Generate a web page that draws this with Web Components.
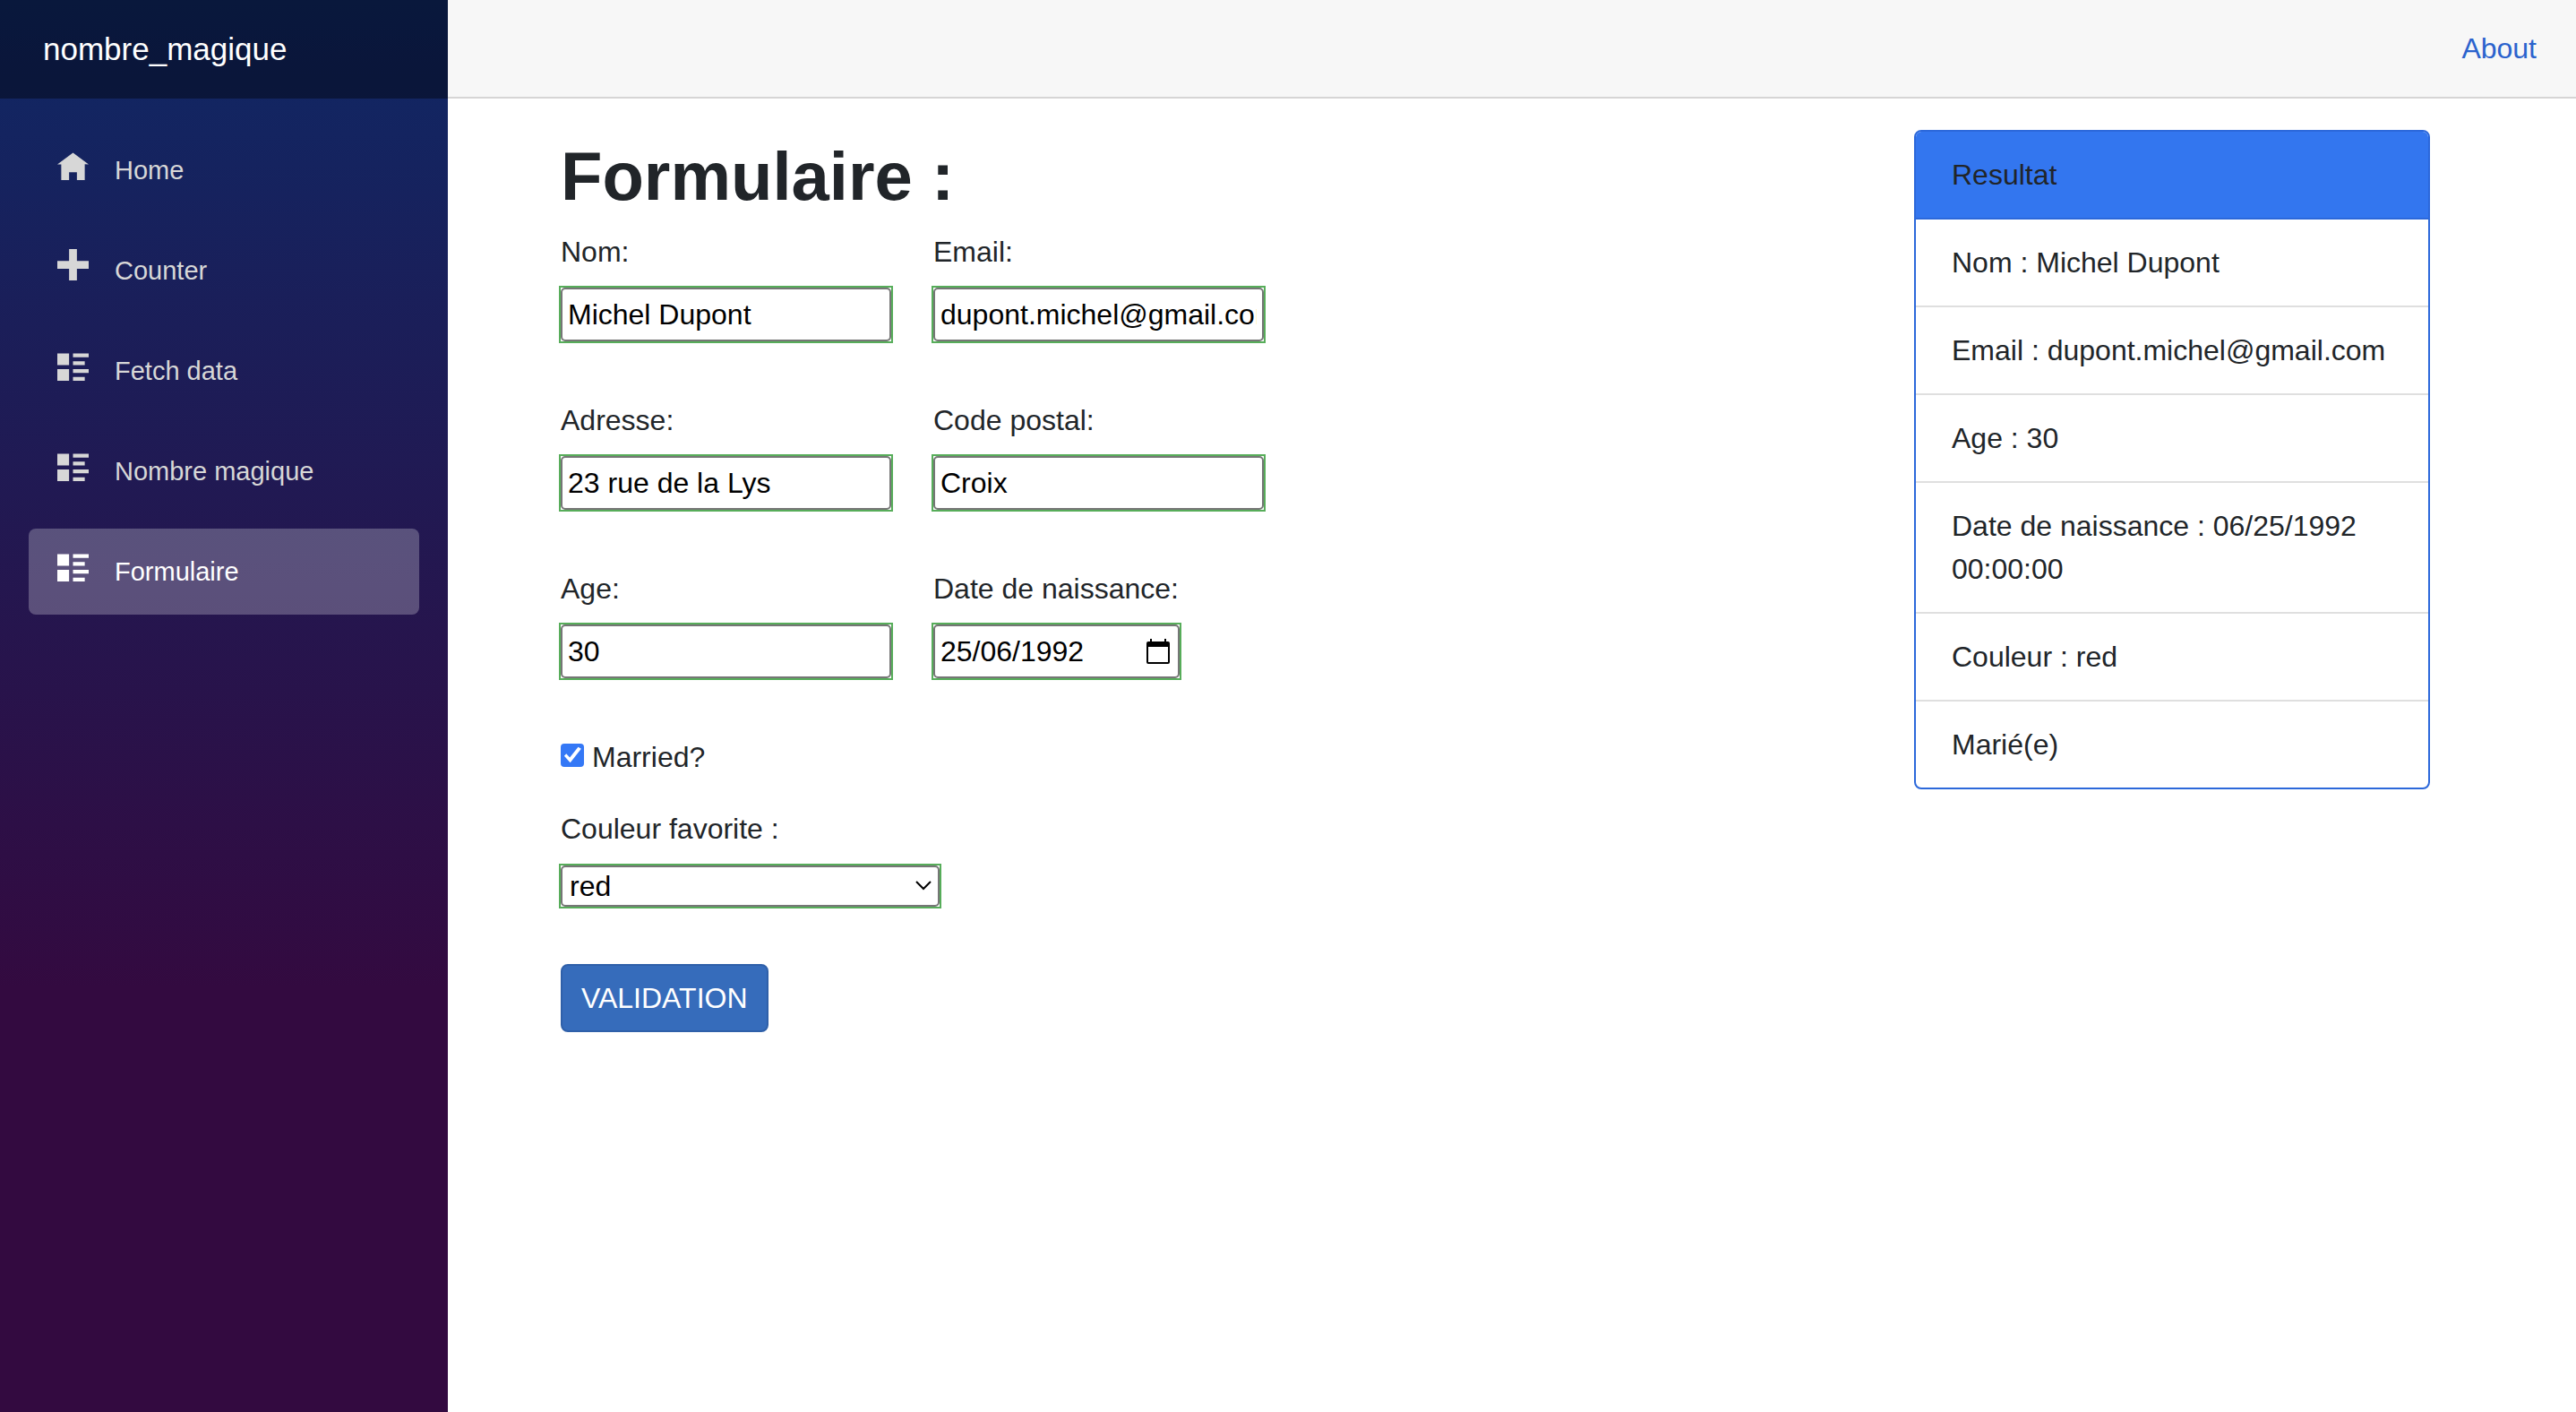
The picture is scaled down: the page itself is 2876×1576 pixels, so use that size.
<!DOCTYPE html>
<html lang="fr">
<head>
<meta charset="utf-8">
<title>nombre_magique</title>
<style>
  body { margin: 0; font-family: "Liberation Sans", Arial, sans-serif; font-size: 32px; line-height: 48px; color: #212529; background: #fff; }
</style>
</head>
<body>
<app-shell>
  <app-sidebar slot="sidebar" brand="nombre_magique">
    <nav-item icon="home" href="#home">Home</nav-item>
    <nav-item icon="plus" href="#counter">Counter</nav-item>
    <nav-item icon="list" href="#fetchdata">Fetch data</nav-item>
    <nav-item icon="list" href="#nombre-magique">Nombre magique</nav-item>
    <nav-item icon="list" href="#formulaire" active>Formulaire</nav-item>
  </app-sidebar>
  <top-bar slot="top"></top-bar>
  <person-form></person-form>
  <result-card heading="Resultat">
    <result-row>Nom : Michel Dupont</result-row>
    <result-row>Email : dupont.michel@gmail.com</result-row>
    <result-row>Age : 30</result-row>
    <result-row>Date de naissance : 06/25/1992 00:00:00</result-row>
    <result-row>Couleur : red</result-row>
    <result-row>Marié(e)</result-row>
  </result-card>
</app-shell>

<script>
const define = (name, render) => customElements.define(name, class extends HTMLElement {
  constructor() { super(); this.attachShadow({ mode: "open" }); }
  connectedCallback() { this.shadowRoot.innerHTML = render(this); }
});

define("app-shell", () => `
  <style>
    :host { display: flex; min-height: 100vh; }
    .side { flex: 0 0 500px; background: linear-gradient(180deg, #0f2865 0%, #330a40 70%); }
    .page { flex: 1; min-width: 0; }
    main { display: flex; justify-content: space-between; align-items: flex-start; gap: 64px; padding: 35px 163px 64px 126px; }
  </style>
  <div class="side"><slot name="sidebar"></slot></div>
  <div class="page">
    <slot name="top"></slot>
    <main><slot></slot></main>
  </div>`);

define("app-sidebar", el => `
  <style>
    :host { display: block; }
    header { display: flex; align-items: center; box-sizing: border-box; height: 110px; padding: 0 48px; background: rgba(0, 0, 0, .4); }
    a { color: #fff; font-size: 35px; text-decoration: none; }
    nav { display: flex; flex-direction: column; gap: 16px; padding: 32px; }
  </style>
  <header><a href="#">${el.getAttribute("brand")}</a></header>
  <nav><slot></slot></nav>`);

const icons = {
  home: "M4 1l-4 3h1v4h2v-2h2v2h2v-4.03l1 .03-4-3z",
  plus: "M3 0v3h-3v2h3v3h2v-3h3v-2h-3v-3h-2z",
  list: "M0 1v3h3v-3h-3zm4 0v1h4v-1h-4zm0 2v1h3v-1h-3zm-4 2v3h3v-3h-3zm4 0v1h4v-1h-4zm0 2v1h3v-1h-3z"
};
define("nav-item", el => `
  <style>
    :host { display: block; }
    a { display: flex; align-items: flex-start; padding-left: 32px; border-radius: 8px; color: #d7d7d7; font-size: 29px; line-height: 96px; text-decoration: none; }
    :host([active]) a { color: #fff; background: rgba(255, 255, 255, .25); }
    svg { width: 35px; height: 35px; margin: 24px 29px 0 0; fill: currentColor; }
  </style>
  <a href="${el.getAttribute("href")}"><svg viewBox="0 0 8 8" aria-hidden="true"><path d="${icons[el.getAttribute("icon")]}"/></svg><slot></slot></a>`);

define("top-bar", () => `
  <style>
    :host { display: flex; align-items: center; justify-content: flex-end; box-sizing: border-box; height: 110px; padding: 0 44px; background: #f7f7f7; border-bottom: 2px solid #d6d5d5; }
    a { color: #2b63cd; text-decoration: none; }
  </style>
  <a href="#about">About</a>`);

define("form-field", el => {
  const date = el.getAttribute("type") === "date";
  return `
  <style>
    :host { display: flex; flex-direction: column; align-items: flex-start; gap: 16px; }
    .frame { display: flex; position: relative; outline: 2px solid #57ad5a; }
    input { box-sizing: border-box; width: ${date ? 275 : 369}px; height: 60px; margin: 0; padding: 2px 6px; border: 2px solid #767676; border-radius: 5px; background: #fff; color: #000; font: inherit; outline: none; }
    button { position: absolute; right: 10px; top: 16px; width: 28px; height: 28px; padding: 0; border: 0; background: none; }
    svg { display: block; }
  </style>
  <label for="control">${el.getAttribute("label")}</label>
  <div class="frame"><input id="control" type="text" value="${el.getAttribute("value")}">${date ? `
    <button type="button" aria-label="Calendrier"><svg width="28" height="28" viewBox="0 0 28 28"><path fill="#000" fill-rule="evenodd" d="M5 0h2v3h14V0h2v3h2q2 0 2 2v21q0 2-2 2H3q-2 0-2-2V5q0-2 2-2h2zM3 9v17h22V9z"/></svg></button>` : ""}</div>`;
});

define("person-form", () => `
  <style>
    :host { display: block; }
    h1 { margin: 0 0 12px; padding-top: 4px; font-size: 76px; line-height: 96px; font-weight: bold; }
    form { display: flex; flex-direction: column; align-items: flex-start; gap: 64px; }
    .grid { display: grid; grid-template-columns: auto auto; gap: 64px 47px; }
    .group { display: flex; flex-direction: column; align-items: flex-start; gap: 32px; }
    .check { display: flex; align-items: center; gap: 9px; }
    .check input { appearance: none; width: 26px; height: 26px; margin: 0 0 4px; border-radius: 4px; background: #3478f6; }
    .check input::before { content: ""; display: block; width: 26px; height: 26px; }
    .check input:checked::before { background: #fff; clip-path: polygon(15% 53%, 24% 43%, 39% 60%, 75% 14%, 88% 22%, 41% 82%); }
    .colour { display: flex; flex-direction: column; align-items: flex-start; gap: 17px; }
    .frame { display: flex; position: relative; outline: 2px solid #57ad5a; }
    select { appearance: none; box-sizing: border-box; width: 423px; height: 46px; margin: 0; padding: 0 40px 0 8px; border: 2px solid #767676; border-radius: 5px; background: #fff; color: #000; font: inherit; line-height: 40px; outline: none; }
    .frame svg { position: absolute; right: 8px; top: 15px; pointer-events: none; }
    .submit { box-sizing: border-box; height: 76px; margin: 0; padding: 0 21px; border: 2px solid #2f60a9; border-radius: 8px; background: #366cbb; color: #fff; font: inherit; }
  </style>
  <h1>Formulaire :</h1>
  <form>
    <div class="grid">
      <form-field label="Nom:" value="Michel Dupont"></form-field>
      <form-field label="Email:" value="dupont.michel@gmail.com"></form-field>
      <form-field label="Adresse:" value="23 rue de la Lys"></form-field>
      <form-field label="Code postal:" value="Croix"></form-field>
      <form-field label="Age:" value="30"></form-field>
      <form-field label="Date de naissance:" value="25/06/1992" type="date"></form-field>
    </div>
    <div class="group">
      <div class="check"><input id="married" type="checkbox" checked><label for="married">Married?</label></div>
      <div class="colour">
        <label for="colour">Couleur favorite :</label>
        <div class="frame">
          <select id="colour"><option selected>red</option></select>
          <svg width="20" height="14" viewBox="0 0 20 14" aria-hidden="true"><path d="M2 3l8 8 8-8" fill="none" stroke="#000" stroke-width="2"/></svg>
        </div>
      </div>
    </div>
    <button class="submit" type="button">VALIDATION</button>
  </form>`);

define("result-card", el => `
  <style>
    :host { display: block; box-sizing: border-box; flex: 0 0 576px; border: 2px solid #2c68da; border-radius: 8px; overflow: hidden; }
    header { padding: 24px 40px; background: #3376ef; border-bottom: 2px solid #2c68da; }
    ::slotted(:not(:last-child)) { border-bottom: 2px solid #dfdfdf; }
  </style>
  <header>${el.getAttribute("heading")}</header>
  <div><slot></slot></div>`);

define("result-row", () => `
  <style>:host { display: block; padding: 24px 40px; }</style>
  <slot></slot>`);
</script>
</body>
</html>
